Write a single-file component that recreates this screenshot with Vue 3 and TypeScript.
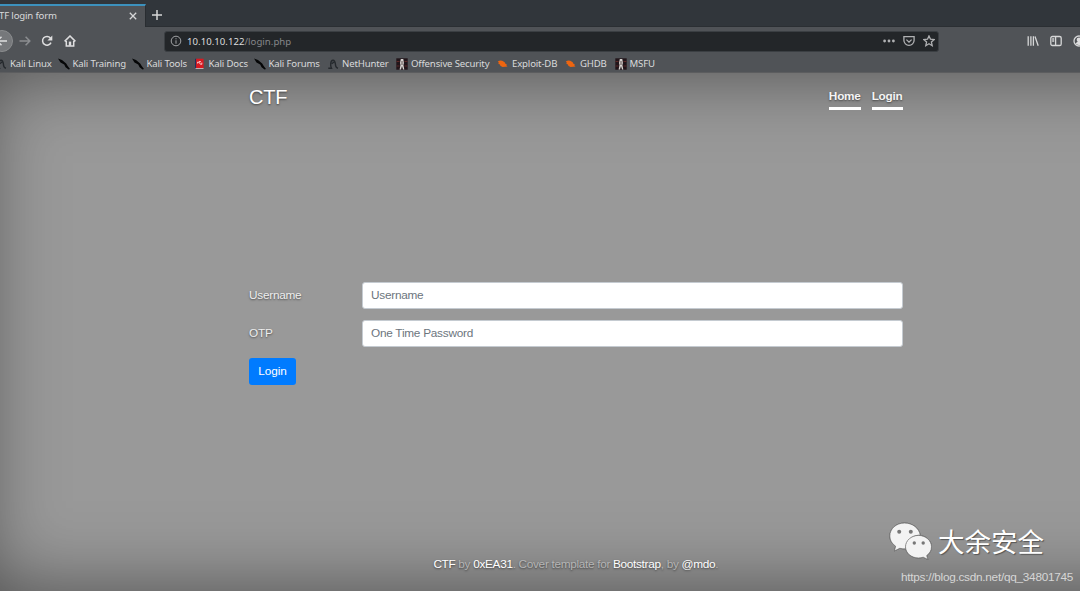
<script setup lang="ts">
import { ref } from 'vue'

interface Bookmark {
  label: string
  icon: 'kali' | 'docs' | 'hunter' | 'offsec' | 'bug'
}

const bookmarks: Bookmark[] = [
  { label: 'Kali Linux', icon: 'hunter' },
  { label: 'Kali Training', icon: 'kali' },
  { label: 'Kali Tools', icon: 'kali' },
  { label: 'Kali Docs', icon: 'docs' },
  { label: 'Kali Forums', icon: 'kali' },
  { label: 'NetHunter', icon: 'hunter' },
  { label: 'Offensive Security', icon: 'offsec' },
  { label: 'Exploit-DB', icon: 'bug' },
  { label: 'GHDB', icon: 'bug' },
  { label: 'MSFU', icon: 'offsec' },
]

const username = ref('')
const otp = ref('')
</script>

<template>
  <div class="window">
    <div class="tabs">
      <div class="tab">
        <span class="tab-title">TF login form</span>
        <svg class="tab-close" viewBox="0 0 8 8"><path d="M.8.8l6.4 6.4M7.2.8L.8 7.2" /></svg>
      </div>
      <svg class="tab-new" viewBox="0 0 10 10"><path d="M5 0v10M0 5h10" /></svg>
    </div>

    <div class="toolbar">
      <div class="nav-icons">
        <span class="back">
          <svg viewBox="0 0 12 12"><path d="M11 6H1.5M5.5 1.8L1.3 6l4.2 4.2" /></svg>
        </span>
        <svg class="forward" viewBox="0 0 12 12"><path d="M.5 6h10M6.6 1.8L10.8 6l-4.2 4.2" /></svg>
        <svg class="reload" viewBox="0 0 12 12">
          <path d="M10 7.6A4.4 4.4 0 1 1 9.4 3" />
          <path class="solid" d="M11.3.6v4.9H6.4z" />
        </svg>
        <svg class="home" viewBox="0 0 12 12">
          <path d="M.6 6.4L6 1l5.4 5.4M2.3 6v5.1h7.4V6" />
          <path class="solid" d="M4.8 6.6h2.4v4.2H4.8z" />
        </svg>
      </div>
      <div class="address">
        <svg class="info" viewBox="0 0 12 12">
          <circle cx="6" cy="6" r="4.8" />
          <path d="M6 5.3v3.4M6 3.2v1.1" />
        </svg>
        <span class="url"><b>10.10.10.122</b>/login.php</span>
        <svg class="dots" viewBox="0 0 12 4">
          <circle cx="1.6" cy="2" r="1.4" /><circle cx="6" cy="2" r="1.4" /><circle cx="10.4" cy="2" r="1.4" />
        </svg>
        <svg class="pocket" viewBox="0 0 12 12">
          <path d="M.9 1.7h10.2v3.6a5.1 5.1 0 0 1-10.2 0zM3.4 4.6L6 7.1l2.6-2.5" />
        </svg>
        <svg class="star" viewBox="0 0 12 12">
          <path d="M6 .9l1.5 3.3 3.6.4-2.7 2.4.8 3.7L6 8.8l-3.2 1.9.8-3.7L.9 4.6l3.6-.4z" />
        </svg>
      </div>
      <div class="tools">
        <svg class="library" viewBox="0 0 12 12"><path d="M1.2 1.2v9.6M3.9 1.2v9.6M6.4 1.2v9.6M8 1.5l3.2 9.2" /></svg>
        <svg class="sidebar" viewBox="0 0 12 12">
          <rect x=".8" y="1.5" width="10.4" height="9" rx="1.6" />
          <path d="M5.6 1.5v9M2.2 4h2M2.2 6h2" />
        </svg>
        <svg class="account" viewBox="0 0 12 12">
          <circle cx="6" cy="6" r="5" />
          <path class="solid" d="M3.7 4.6a2.3 2.1 0 0 1 4.6 0c0 1.1-.5 1.8-1 2.2l2.2 1.4A4 4 0 0 1 6 10a4 4 0 0 1-3.5-1.8l2.2-1.4c-.5-.4-1-1.1-1-2.2z" />
        </svg>
      </div>
    </div>

    <div class="bookmarks">
      <span v-for="item in bookmarks" :key="item.label" class="bookmark">
        <svg v-if="item.icon === 'kali'" viewBox="0 0 12 12">
          <path fill="#050607" d="M0 .5l4 1.4 4.200 3.600L9.700 8l2.300 3-1.400.6-3-2.400-1.400-2.600-3.700-2.200z" />
        </svg>
        <svg v-else-if="item.icon === 'docs'" viewBox="0 0 12 12">
          <path fill="#22305e" d="M1 .7h1.500v10H1z" />
          <path fill="#d91920" d="M2.100.7h7.500v9.600H2.100z" />
          <path fill="#d9cccc" d="M1.500 10.200h8v.8h-8z" />
          <path fill="none" stroke="#f8dede" stroke-width=".9" d="M3.600 5.500V4.100l1.600.2 1 1.800 1.600.2V4.600M5 3.500l2 .2" />
        </svg>
        <svg v-else-if="item.icon === 'hunter'" viewBox="0 0 12 12">
          <path fill="none" stroke="#25292d" stroke-width="1.4" d="M1.300 10.300h3.200C3.200 8 3.200 2.500 6 2.300c2.500-.1 2.300 4.200 2.700 5.700.3 1.200 1.200 2 2.300 2.300M4.800 5.800L7 4" />
        </svg>
        <svg v-else-if="item.icon === 'offsec'" viewBox="0 0 12 12">
          <path fill="#21151a" d="M.3.3h11.400v11.400H.3z" />
          <path stroke="#5b2928" d="M.5 3.500h3m5 0h3M.5 8h3m5 0h3" />
          <path fill="#d9d4d1" d="M4.800 1h2.500l.6 4-.5 2 .9 4.500H7L6 8l-1 3.500H3.600L4.500 7 4 5z" />
          <path fill="#5b4c4c" d="M5.500 3h1v4h-1z" />
        </svg>
        <svg v-else viewBox="0 0 12 12">
          <path fill="#ed6510" d="M.8 3.600l2.200-1.200 2.200.3 2.500 1.500.5 1.200 1.600 1-.4 1.100 1.200 1-2.200.3-2.800.2-2-1.100-1-1.600-1.500-.8.8-.8z" />
        </svg>
        {{ item.label }}
      </span>
    </div>

    <div class="page">
      <div class="cover">
        <header class="masthead">
          <h3 class="brand">CTF</h3>
          <nav class="links">
            <a>Home</a>
            <a>Login</a>
          </nav>
        </header>
        <form class="form" @submit.prevent>
          <label for="user">Username</label>
          <input id="user" v-model="username" type="text" placeholder="Username" />
          <label for="otp">OTP</label>
          <input id="otp" v-model="otp" type="text" placeholder="One Time Password" />
          <button type="submit">Login</button>
        </form>
        <footer class="foot">
          <a>CTF</a> by <a>0xEA31</a>. Cover template for <a>Bootstrap</a>, by <a>@mdo</a>.
        </footer>
      </div>
    </div>

    <div class="watermark">
      <svg class="chat" viewBox="0 0 44 38">
        <path class="bubble" d="M15.5 1C7.1 1 .8 6.8.8 14c0 4.4 2.2 7.8 5.8 10.2L5.4 29l5.4-2.7c2 .5 4 .7 6.1.5 0-8 6.3-13.5 14.4-13.7C30 6 23.5 1 15.5 1z" />
        <path class="bubble" d="M29.5 13.4c7.2 0 13 5.1 13 11.4 0 3.7-1.9 6.8-4.8 8.8l1.2 3.9-4.7-2.3c-1.4.5-3 .8-4.7.8-7.2 0-13-5-13-11.2s5.8-11.4 13-11.4z" />
        <g class="eyes">
          <circle cx="10.2" cy="9.7" r="2" /><circle cx="21.8" cy="9.7" r="2" />
          <circle cx="25.3" cy="21" r="1.7" /><circle cx="34.2" cy="21" r="1.7" />
        </g>
      </svg>
      <span class="author">大余安全</span>
    </div>
    <span class="source">https://blog.csdn.net/qq_34801745</span>
  </div>
</template>

<style>
body {
  margin: 0;
  overflow: hidden;
}
</style>

<style scoped>
.window {
  position: relative;
  display: flex;
  flex-direction: column;
  width: 1080px;
  height: 591px;
  overflow: hidden;
  background: #505357;
  color: #d9dadb;
  font-family: "Noto Sans", sans-serif;
  font-size: 9.6px;
  letter-spacing: -0.16px;
}
svg {
  display: block;
  flex: none;
  fill: none;
}
.tabs {
  display: flex;
  align-items: center;
  box-sizing: border-box;
  height: 27px;
  padding-top: 4px;
  border-bottom: 1px solid #2b2f33;
  background: #31363b;
}
.tab {
  display: flex;
  align-items: center;
  justify-content: space-between;
  box-sizing: border-box;
  width: 146px;
  height: 23px;
  margin-bottom: -1px;
  padding: 0 8px 2px 0;
  border-top: 2px solid #3c91bd;
  border-right: 1px solid #292d31;
  background: #505357;
}
.tab-title {
  margin-left: -1px;
}
.tab-close {
  width: 8px;
  height: 8px;
  stroke: #d6d7d8;
  stroke-width: 1.3;
}
.tab-new {
  width: 10px;
  height: 10px;
  margin-left: 6px;
  stroke: #d6d7d8;
  stroke-width: 1.5;
}
.toolbar {
  display: flex;
  align-items: center;
  height: 28px;
}
.nav-icons {
  display: flex;
  flex: none;
  align-items: center;
  width: 164px;
}
.nav-icons svg {
  width: 12px;
  height: 12px;
  stroke: #dededf;
  stroke-width: 1.5;
}
.back {
  display: flex;
  align-items: center;
  justify-content: center;
  flex: none;
  box-sizing: border-box;
  width: 22px;
  height: 22px;
  margin-left: -9px;
  border: 1px solid #8a8c8e;
  border-radius: 50%;
  background: #76787b;
}
.nav-icons .forward {
  margin-left: 6px;
  stroke: #8c8e91;
}
.reload {
  margin-left: 10px;
}
.home {
  margin-left: 11px;
}
.solid {
  fill: #dededf;
  stroke: none;
}
.address {
  display: flex;
  flex: none;
  align-items: center;
  box-sizing: border-box;
  width: 775px;
  height: 21px;
  padding: 0 3px 0 5px;
  border: 1px solid #3b3f43;
  border-radius: 3px;
  background: #232629;
}
.address svg {
  width: 12px;
  height: 12px;
  stroke: #b0b1b3;
  stroke-width: 1.3;
}
.address .info {
  stroke-width: 0.9;
}
.url {
  flex: 1;
  margin-left: 5px;
  color: #85878a;
  letter-spacing: 0.03px;
}
.url b {
  color: #dcddde;
  font-weight: 400;
}
.address .dots {
  height: 4px;
  fill: #b0b1b3;
  stroke: none;
}
.pocket {
  margin-left: 8px;
}
.star {
  margin-left: 8px;
}
.tools {
  display: flex;
  flex: none;
  align-items: center;
  gap: 11px;
  margin-left: 88px;
}
.tools svg {
  width: 12px;
  height: 12px;
  stroke: #d6d7d8;
  stroke-width: 1.3;
}
.bookmarks {
  display: grid;
  grid-template-columns: 62.5px 74px 62px 60px 73.5px 69px 101px 68px 49.5px 60px;
  align-items: center;
  box-sizing: border-box;
  height: 18px;
  margin-left: -5px;
  border-bottom: 1px solid #5c5d5f;
}
.bookmark {
  display: flex;
  align-items: center;
  gap: 3px;
  white-space: nowrap;
}
.bookmark svg {
  width: 12px;
  height: 12px;
}
.page {
  position: relative;
  flex: 1;
  overflow: hidden;
  background: #999;
  color: #fff;
  font-family: "Liberation Sans", Arial, sans-serif;
  font-size: 11.8px;
  letter-spacing: -0.25px;
  text-shadow: 0 0.7px 2px rgba(0, 0, 0, 0.5);
}
.page::before {
  content: "";
  position: absolute;
  inset: 0 -90px 0 -17px;
  box-shadow: inset 0 0 76px rgba(0, 0, 0, 0.5);
}
.cover {
  position: relative;
  display: flex;
  flex-direction: column;
  justify-content: space-between;
  box-sizing: border-box;
  width: 653.5px;
  height: 100%;
  margin-left: 249px;
  padding: 12px 0 18px;
}
.masthead {
  display: flex;
  justify-content: space-between;
}
.brand {
  margin: 0;
  font-size: 20px;
  font-weight: 400;
  line-height: 24px;
}
.links {
  display: flex;
  gap: 11px;
  padding-top: 3px;
}
.links a {
  height: 19px;
  border-bottom: 3px solid #fff;
  color: #f4f4f4;
  font-weight: 700;
  line-height: 17px;
}
.form {
  display: grid;
  grid-template-columns: 113px 540.5px;
  row-gap: 11px;
  align-items: center;
}
.form label {
  color: #eee;
}
.form input {
  box-sizing: border-box;
  width: 100%;
  height: 27px;
  padding: 0 8px;
  border: 1px solid #c5cbd1;
  border-radius: 3px;
  background: #fff;
  color: #495057;
  font: inherit;
  letter-spacing: inherit;
}
.form input::placeholder {
  color: #6c757d;
  opacity: 1;
}
.form button {
  width: 47px;
  height: 27px;
  padding: 0;
  border: 0;
  border-radius: 3px;
  background: #007bff;
  color: #fff;
  font: inherit;
  letter-spacing: -0.1px;
}
.foot {
  color: #b5b5b5;
  line-height: 17px;
  letter-spacing: -0.31px;
  text-align: center;
}
.foot a {
  color: #fff;
}
.watermark {
  position: absolute;
  top: 522px;
  left: 889px;
  display: flex;
  align-items: center;
  gap: 5px;
  letter-spacing: 0;
}
.chat {
  width: 44px;
  height: 38px;
  filter: drop-shadow(0.5px 0.5px 0.5px #555);
}
.bubble {
  fill: #f3f3f3;
  stroke: #777;
  stroke-width: 0.8;
}
.eyes {
  fill: #777;
}
.author {
  color: #fff;
  font-family: "Noto Sans CJK SC", sans-serif;
  font-size: 26.5px;
  line-height: 38px;
  text-shadow: 1px 1px 1px #555;
}
.source {
  position: absolute;
  top: 570px;
  left: 901px;
  color: #d6d6d6;
  font-family: "Liberation Sans", Arial, sans-serif;
  font-size: 11.8px;
  line-height: 15px;
  letter-spacing: -0.27px;
}
</style>
